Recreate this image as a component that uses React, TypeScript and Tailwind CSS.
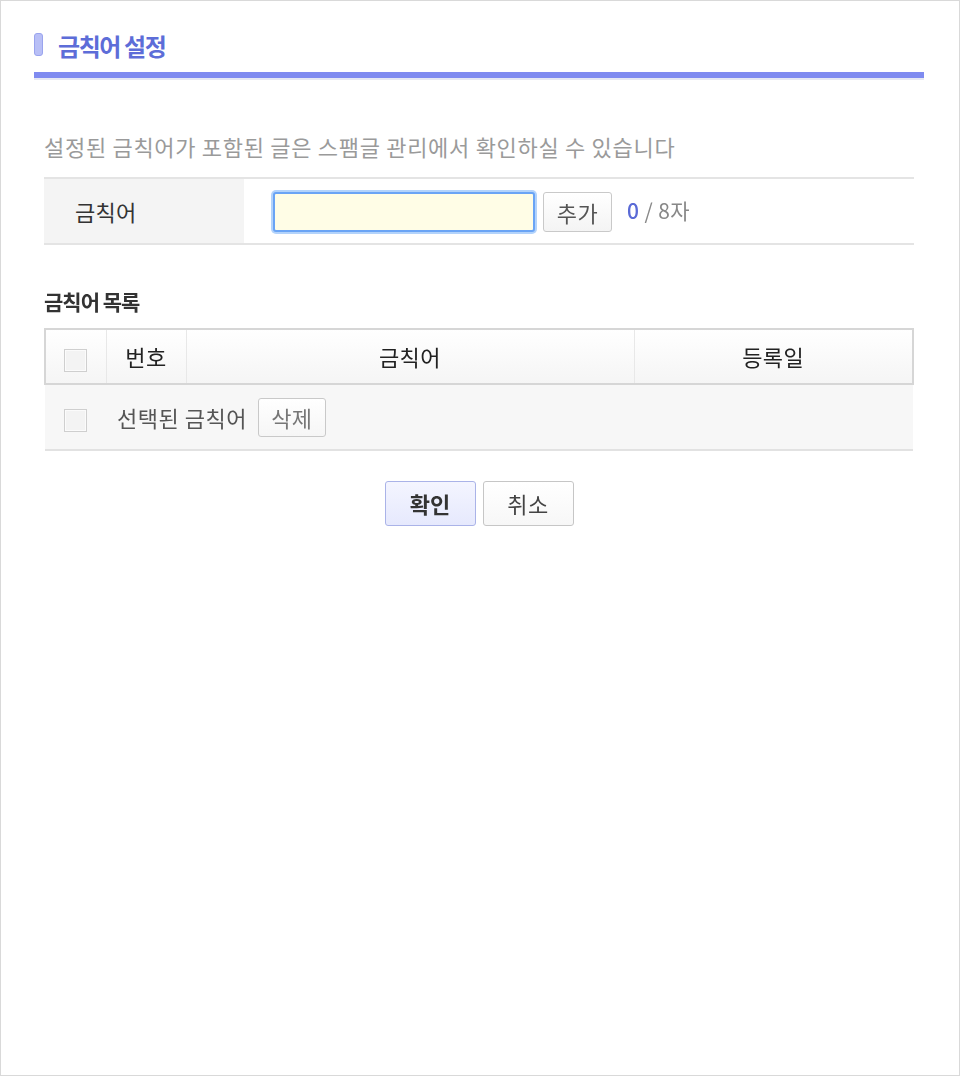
import { useState } from "react";

const font = { fontFamily: '"Noto Sans CJK KR", "Noto Sans", sans-serif' };

function Checkbox() {
  return (
    <span className="inline-block h-[23px] w-[23px] align-middle border border-[#cfcfcf] bg-[#f3f3f3] shadow-[inset_0_0_0_1px_#fbfbfb]" />
  );
}

export default function App() {
  const [word, setWord] = useState("");

  return (
    <div className="h-[1076px] w-[960px] border border-[#d9d9d9] bg-white text-[#333]" style={font}>
      <div className="px-[33px] pt-[31px]">
        <div className="flex h-[25px] items-center gap-[15px]">
          <span className="h-[23px] w-[9px] rounded-[3px] border border-[#9aa4ee] bg-[#b8bff6]" />
          <h1 className="mt-[3px] text-[24px] font-bold leading-none tracking-[-1.4px] text-[#5d6dd8]">금칙어 설정</h1>
        </div>
        <div className="mt-[15px] h-[8px] w-[890px] border-b-2 border-[#e6e8f3] bg-[#7f8bf0]" />
      </div>

      <div className="px-[43px]">
        <p className="mt-[55px] text-[22px] leading-none tracking-[0.7px] text-[#9a9a9a]">
          설정된 금칙어가 포함된 글은 스팸글 관리에서 확인하실 수 있습니다
        </p>

        <div className="mt-[20px] flex h-[68px] w-[870px] border-y-2 border-[#e4e4e4]">
          <div className="flex w-[200px] items-center bg-[#f4f4f4] pl-[31px] text-[22px] tracking-[0.3px] text-[#333]">금칙어</div>
          <div className="flex items-center pl-[29px]">
            <input
              autoFocus
              value={word}
              maxLength={8}
              onChange={(e) => setWord(e.target.value)}
              className="mt-[2px] h-[40px] w-[262px] rounded-[3px] border-2 border-[#6aa4f5] bg-[#fffde6] px-[6px] text-[18px] outline-none shadow-[0_0_0_2px_#b3d3fb]"
            />
            <button className="ml-[8px] mt-[2px] h-[40px] w-[69px] rounded-[3px] border border-[#c9c9c9] bg-gradient-to-b from-white to-[#f4f4f4] text-[22px] tracking-[0.5px] text-[#555]">
              추가
            </button>
            <span className="ml-[15px] text-[21px] tracking-[0.4px] text-[#888]">
              <span className="font-medium text-[#5a6ad6]">{word.length}</span> / 8자
            </span>
          </div>
        </div>

        <h2 className="mt-[46px] text-[21px] font-bold leading-none tracking-[-1px] text-[#333]">금칙어 목록</h2>

        <table className="mt-[16px] w-[870px] border-collapse text-[22px]">
          <thead>
            <tr className="h-[55px] bg-gradient-to-b from-white to-[#f5f5f5]">
              <th className="w-[61px] border-y-2 border-l-2 border-[#d6d6d6] font-normal">
                <Checkbox />
              </th>
              <th className="w-[80px] border-y-2 border-l border-[#d6d6d6] border-l-[#e8e8e8] font-normal tracking-[0.5px] text-[#222]">번호</th>
              <th className="w-[448px] border-y-2 border-l border-[#d6d6d6] border-l-[#e8e8e8] font-normal tracking-[0.5px] text-[#222]">금칙어</th>
              <th className="border-y-2 border-l border-r-2 border-[#d6d6d6] border-l-[#e8e8e8] font-normal tracking-[0.5px] text-[#222]">등록일</th>
            </tr>
          </thead>
          <tbody>
            <tr className="h-[66px] border-b-2 border-[#e2e2e2] bg-[#f7f7f7]">
              <td className="text-center">
                <Checkbox />
              </td>
              <td colSpan={3} className="pl-[11px]">
                <div className="flex items-center">
                  <span className="tracking-[0.5px] text-[#555]">선택된 금칙어</span>
                  <button className="ml-[11px] h-[39px] w-[68px] rounded-[3px] border border-[#c9c9c9] bg-gradient-to-b from-white to-[#f6f6f6] text-[22px] tracking-[0.5px] text-[#777]">
                    삭제
                  </button>
                </div>
              </td>
            </tr>
          </tbody>
        </table>

        <div className="mt-[30px] flex justify-center gap-[7px] pr-[2px]">
          <button className="h-[45px] w-[91px] rounded-[3px] border border-[#aab3e8] bg-gradient-to-b from-[#f4f5ff] to-[#e6e9fd] text-[22px] font-bold text-[#333]">
            확인
          </button>
          <button className="h-[45px] w-[91px] rounded-[3px] border border-[#c6c6c6] bg-gradient-to-b from-white to-[#f7f7f7] text-[22px] tracking-[0.5px] text-[#444]">
            취소
          </button>
        </div>
      </div>
    </div>
  );
}
